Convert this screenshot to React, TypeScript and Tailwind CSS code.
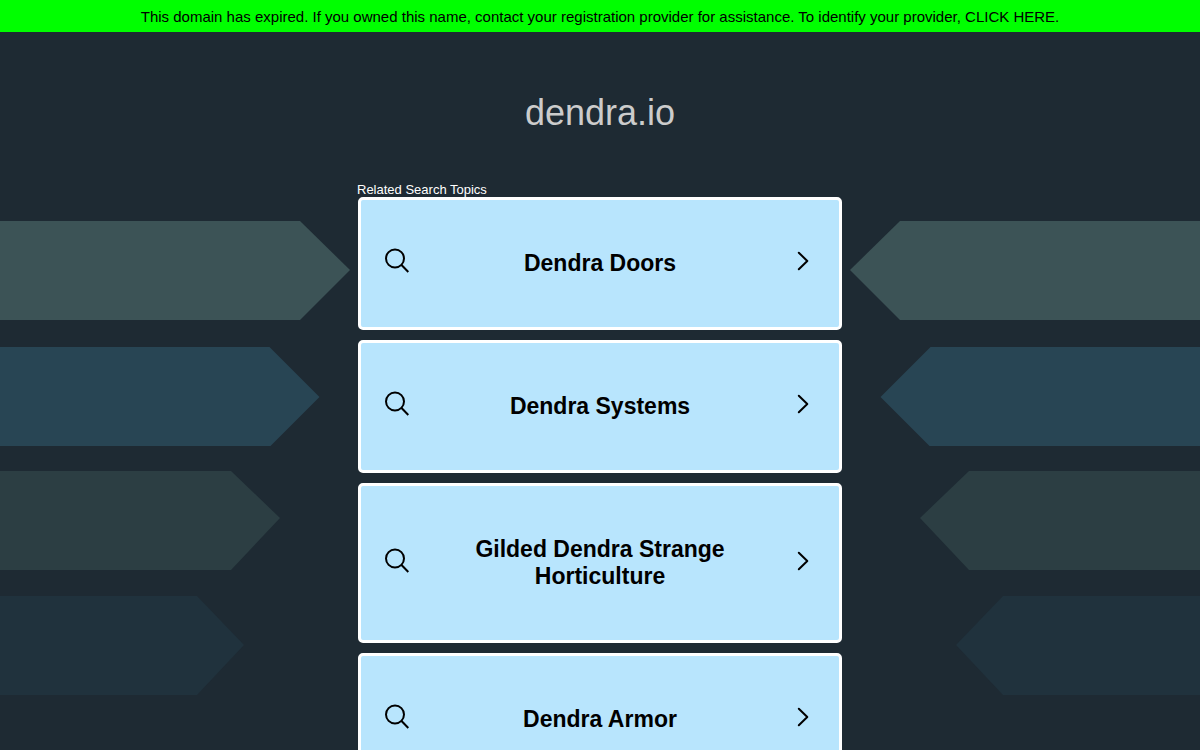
const topics = [
  'Dendra Doors',
  'Dendra Systems',
  'Gilded Dendra Strange Horticulture',
  'Dendra Armor',
];

function SearchIcon() {
  return (
    <svg className="mb-1 h-[23px] w-7 shrink-0 overflow-visible" viewBox="0 0 28 23" fill="none" stroke="currentColor" strokeWidth="2" aria-hidden="true">
      <circle cx="12" cy="8.5" r="9" />
      <path d="M18.3 14.8 L25.3 22" />
    </svg>
  );
}

function ChevronIcon() {
  return (
    <svg className="mb-1 h-[23px] w-7 shrink-0 overflow-visible" viewBox="0 0 28 23" fill="none" stroke="currentColor" strokeWidth="2" strokeLinecap="round" strokeLinejoin="round" aria-hidden="true">
      <path d="M9.8 2.700 L18.300 11 L9.800 19.300" />
    </svg>
  );
}

function Arrows() {
  return (
    <>
      <path fill="#3c5356" d="M-2000 11 H300 L350 60 L300 110 H-2000 Z" />
      <path fill="#284554" d="M-2000 137 H269.5 L319.5 187 L270.5 236 H-2000 Z" />
      <path fill="#2c3e43" d="M-2000 261 H231 L280 308 L231 360 H-2000 Z" />
      <path fill="#20323d" d="M-2000 386 H197 L244 435 L197 485 H-2000 Z" />
    </>
  );
}

function Backdrop() {
  return (
    <div className="pointer-events-none absolute inset-0 -z-10 flex overflow-hidden pt-[178px]" aria-hidden="true">
      <div className="flex flex-1 justify-end">
        <svg className="h-[500px] w-[600px] shrink-0 overflow-visible" viewBox="0 0 600 500">
          <Arrows />
        </svg>
      </div>
      <div className="flex flex-1">
        <svg className="h-[500px] w-[600px] shrink-0 -scale-x-100 overflow-visible" viewBox="0 0 600 500">
          <Arrows />
        </svg>
      </div>
    </div>
  );
}

export default function App() {
  return (
    <div className="flex min-h-screen flex-col bg-[#1e2a33] font-['Liberation_Sans',Arial,sans-serif]">
      <div className="bg-[#00ff00] px-2 pt-1.5 pb-[5px] text-center text-[15px] leading-[21px] text-black">
        This domain has expired. If you owned this name, contact your registration provider for assistance. To identify your provider,{' '}
        <a href="#provider">CLICK HERE.</a>
      </div>
      <div className="relative isolate flex-1">
        <Backdrop />
        <h1 className="pt-[61px] pb-[49px] text-center text-4xl text-[#cccccc]">dendra.io</h1>
        <main className="mx-auto w-full max-w-[486px]">
          <h2 className="text-[13px] leading-[15px] text-white">Related Search Topics</h2>
          <ul className="flex flex-col gap-2.5 px-px pb-2.5">
            {topics.map((topic) => (
              <li key={topic}>
                <a
                  href="#topic"
                  className="flex items-center gap-12 rounded-[5px] border-3 border-white bg-[#b8e5fd] px-[22px] py-[50px] text-black"
                >
                  <SearchIcon />
                  <span className="flex-1 text-center text-[23px] leading-[27px] font-bold">{topic}</span>
                  <ChevronIcon />
                </a>
              </li>
            ))}
          </ul>
        </main>
      </div>
    </div>
  );
}
